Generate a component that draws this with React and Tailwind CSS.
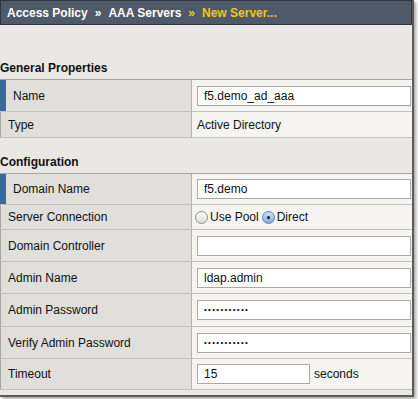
const general = [
  { label: 'Name', kind: 'input', value: 'f5.demo_ad_aaa', required: true, h: 'h-[32px]' },
  { label: 'Type', kind: 'text', value: 'Active Directory', h: 'h-[26px]' },
];

const config = [
  { label: 'Domain Name', kind: 'input', value: 'f5.demo', required: true, h: 'h-[31px]' },
  { label: 'Server Connection', kind: 'radio', h: 'h-[25px]' },
  { label: 'Domain Controller', kind: 'input', value: '', h: 'h-[32px]' },
  { label: 'Admin Name', kind: 'input', value: 'ldap.admin', h: 'h-[32px]' },
  { label: 'Admin Password', kind: 'password', h: 'h-[33px]' },
  { label: 'Verify Admin Password', kind: 'password', h: 'h-[32px]' },
  { label: 'Timeout', kind: 'timeout', value: '15', h: 'h-[31px]' },
];

function Box({ children, className = 'w-[214px]' }) {
  return (
    <div className={`h-[20px] ${className} border border-[#a9a9a9] bg-white pl-[6px] flex items-center text-[12px] text-[#111]`}>
      {children}
    </div>
  );
}

function Radio({ checked }) {
  return (
    <span
      className={`inline-flex w-[13px] h-[13px] rounded-full border items-center justify-center ${
        checked
          ? 'border-[#5a7ea8] bg-gradient-to-b from-[#cfe3f7] to-[#7eaee0]'
          : 'border-[#8a8a8a] bg-gradient-to-b from-[#fdfdfd] to-[#dcdcdc]'
      }`}
    >
      {checked && <span className="w-[3px] h-[3px] rounded-full bg-[#111]" />}
    </span>
  );
}

function Value({ row }) {
  if (row.kind === 'text') return <span>{row.value}</span>;
  if (row.kind === 'input') return <Box>{row.value}</Box>;
  if (row.kind === 'password')
    return (
      <Box>
        <span className="text-[8px] leading-none tracking-[1.3px]">•••••••••••</span>
      </Box>
    );
  if (row.kind === 'timeout')
    return (
      <div className="flex items-center">
        <Box className="w-[113px]">{row.value}</Box>
        <span className="ml-[4px]">seconds</span>
      </div>
    );
  return (
    <div className="flex items-center -ml-[2px]">
      <Radio />
      <span className="ml-[2px]">Use Pool</span>
      <span className="ml-[3px] flex"><Radio checked /></span>
      <span className="ml-[2px]">Direct</span>
    </div>
  );
}

function Row({ row }) {
  return (
    <div className={`flex ${row.h} border-b border-[#c3c1bd]`}>
      <div
        className={`w-[192px] shrink-0 flex items-center bg-[#e0dfdb] border-r border-[#b3b1ad] ${
          row.required ? 'border-l-[6px] border-l-[#3c6997] pl-[7px]' : 'border-l border-l-[#a7a5a2] pl-[7px]'
        }`}
      >
        {row.label}
      </div>
      <div className="flex-1 flex items-center bg-[#f5f4f1] pl-[5px]">
        <Value row={row} />
      </div>
    </div>
  );
}

function Section({ title, rows, top }) {
  return (
    <section className={top}>
      <h2 className="h-[18px] leading-[14px] font-bold text-[12px] text-[#111]">{title}</h2>
      <div className="border-t border-[#a9a7a4]">
        {rows.map((row) => (
          <Row key={row.label} row={row} />
        ))}
      </div>
    </section>
  );
}

export default function App() {
  return (
    <div className="w-[418px] h-[399px] bg-white font-['Liberation_Sans',Arial,sans-serif]">
      <div className="w-[414px] h-[397px] bg-[#eae8e4] border-r-2 border-b-2 border-[#5a5a5a] shadow-[2px_2px_3px_rgba(0,0,0,0.35)] text-[12px] text-[#111]">
        <header className="h-[25px] bg-[#4f5a69] border border-[#2e3540] flex items-center pl-[6px] font-bold text-[12px] text-white">
          <span>Access Policy</span>
          <span className="mx-[7px]">»</span>
          <span>AAA Servers</span>
          <span className="mx-[7px] text-[#f4c419]">»</span>
          <span className="text-[#f4c419]">New Server...</span>
        </header>
        <Section title="General Properties" rows={general} top="mt-[36px]" />
        <Section title="Configuration" rows={config} top="mt-[17px]" />
      </div>
    </div>
  );
}
